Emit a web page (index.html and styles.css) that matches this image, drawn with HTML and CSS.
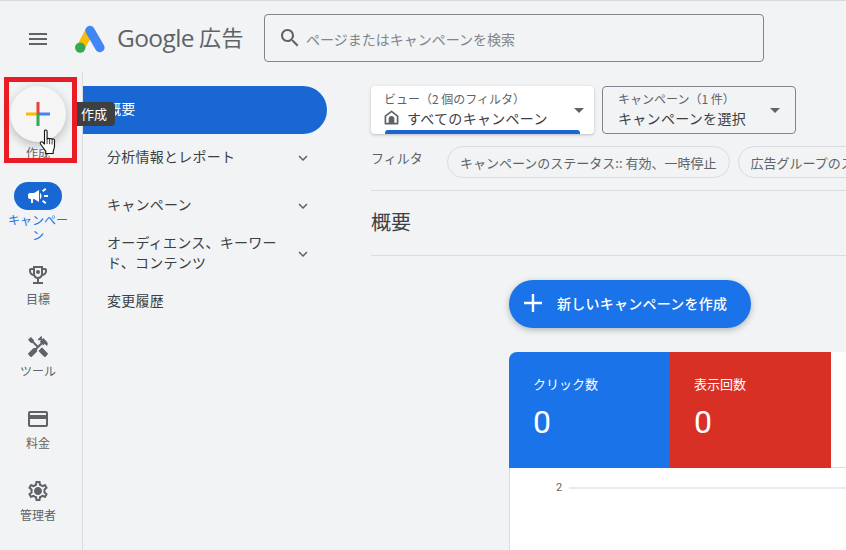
FILE: index.html
```html
<!DOCTYPE html>
<html lang="ja">
<head>
<meta charset="utf-8">
<title>Google 広告</title>
<link rel="stylesheet" href="styles.css">
</head>
<body>
<div class="app">
  <header class="topbar">
    <svg class="menu-icon" viewBox="0 0 24 24"><path d="M3 18h18v-2H3v2zm0-5h18v-2H3v2zm0-7v2h18V6H3z"/></svg>
    <svg class="logo" viewBox="0 0 30 28">
      <path d="M14.500 6 L6 22" stroke="#fbbc04" stroke-width="8.500" stroke-linecap="round" fill="none"/>
      <path d="M15 5.500 L24.800 22.500" stroke="#4285f4" stroke-width="9.500" stroke-linecap="round" fill="none"/>
      <circle cx="5.200" cy="22.600" r="5.200" fill="#34a853"/>
    </svg>
    <div class="brand"><span class="brand-g">Google</span><span class="brand-ad">広告</span></div>
    <div class="search">
      <svg class="search-icon" viewBox="0 0 24 24"><path d="M15.5 14h-.79l-.28-.27C15.41 12.59 16 11.11 16 9.5 16 5.91 13.09 3 9.5 3S3 5.91 3 9.5 5.91 16 9.5 16c1.61 0 3.09-.59 4.23-1.57l.27.28v.79l5 4.99L20.49 19l-4.99-5zm-6 0C7.01 14 5 11.99 5 9.5S7.01 5 9.5 5 14 7.01 14 9.5 11.99 14 9.5 14z"/></svg>
      <span>ページまたはキャンペーンを検索</span>
    </div>
  </header>

  <div class="body">
    <aside class="rail">
      <div class="create">
        <div class="fab">
          <svg viewBox="0 0 24 24" class="fab-plus">
            <rect x="0" y="10.5" width="12" height="3" fill="#fbbc04"/>
            <rect x="12" y="10.5" width="12" height="3" fill="#4285f4"/>
            <rect x="10.5" y="0" width="3" height="12" fill="#ea4335"/>
            <rect x="10.5" y="12" width="3" height="12" fill="#34a853"/>
          </svg>
        </div>
        <div class="rail-label create-label">作成</div>
      </div>
      <div class="rail-item active">
        <div class="pill">
          <svg class="rail-icon" viewBox="0 0 24 24"><path d="M18 11v2h4v-2h-4zm-2 6.61c.96.71 2.21 1.65 3.2 2.39.4-.53.8-1.07 1.2-1.6-.99-.74-2.24-1.68-3.2-2.4-.4.54-.8 1.08-1.2 1.61zM20.4 5.6c-.4-.53-.8-1.07-1.2-1.6-.99.74-2.24 1.68-3.2 2.4.4.53.8 1.07 1.2 1.6.96-.72 2.21-1.65 3.2-2.4zM4 9c-1.1 0-2 .9-2 2v2c0 1.1.9 2 2 2h1v4h2v-4h1l5 3V6L8 9H4zm11.5 3c0-1.33-.58-2.53-1.5-3.35v6.69c.92-.81 1.5-2.01 1.5-3.34z"/></svg>
        </div>
        <div class="rail-label">キャンペーン</div>
      </div>
      <div class="rail-item">
        <svg class="rail-icon" viewBox="0 0 24 24"><path d="M19 5h-2V3H7v2H5c-1.1 0-2 .9-2 2v1c0 2.55 1.92 4.63 4.39 4.94.63 1.5 1.98 2.63 3.61 2.96V19H7v2h10v-2h-4v-3.1c1.63-.33 2.98-1.46 3.61-2.96C19.08 12.63 21 10.55 21 8V7c0-1.1-.9-2-2-2zM5 8V7h2v3.82C5.84 10.4 5 9.3 5 8zm7 6c-1.65 0-3-1.35-3-3V5h6v6c0 1.65-1.35 3-3 3zm7-6c0 1.3-.84 2.4-2 2.82V7h2v1z"/><circle cx="12" cy="9" r="2"/></svg>
        <div class="rail-label">目標</div>
      </div>
      <div class="rail-item">
        <svg class="rail-icon" viewBox="0 0 24 24"><path d="M21.67 18.17l-5.3-5.3h-.99l-2.54 2.54v.99l5.3 5.3c.39.39 1.02.39 1.41 0l2.12-2.12c.39-.38.39-1.02 0-1.41z"/><path d="M17.34 10.19l1.41-1.41 2.12 2.12c1.17-1.17 1.17-3.07 0-4.24l-3.54-3.54-1.41 1.41V1.71l-.7-.71-3.54 3.54.71.71h2.83l-1.41 1.41 1.06 1.06-2.89 2.89-4.13-4.13V5.06L4.83 2.04 2 4.87 5.03 7.9h1.41l4.13 4.13-.85.85H7.6l-5.3 5.3c-.39.39-.39 1.02 0 1.41l2.12 2.12c.39.39 1.02.39 1.41 0l5.3-5.3v-2.12l5.15-5.15 1.06 1.05z"/></svg>
        <div class="rail-label">ツール</div>
      </div>
      <div class="rail-item">
        <svg class="rail-icon" viewBox="0 0 24 24"><path d="M20 4H4c-1.11 0-1.99.89-1.99 2L2 18c0 1.11.89 2 2 2h16c1.11 0 2-.89 2-2V6c0-1.11-.89-2-2-2zm0 14H4v-6h16v6zm0-10H4V6h16v2z"/></svg>
        <div class="rail-label">料金</div>
      </div>
      <div class="rail-item">
        <svg class="rail-icon" viewBox="0 0 24 24"><path d="M19.43 12.98c.04-.32.07-.64.07-.98 0-.34-.03-.66-.07-.98l2.11-1.65c.19-.15.24-.42.12-.64l-2-3.46c-.09-.16-.26-.25-.44-.25-.06 0-.12.01-.17.03l-2.49 1c-.52-.4-1.08-.73-1.69-.98l-.38-2.65C14.46 2.18 14.25 2 14 2h-4c-.25 0-.46.18-.49.42l-.38 2.65c-.61.25-1.17.59-1.69.98l-2.49-1c-.06-.02-.12-.03-.18-.03-.17 0-.34.09-.43.25l-2 3.46c-.13.22-.07.49.12.64l2.11 1.65c-.04.32-.07.65-.07.98 0 .33.03.66.07.98l-2.11 1.65c-.19.15-.24.42-.12.64l2 3.46c.09.16.26.25.44.25.06 0 .12-.01.17-.03l2.49-1c.52.4 1.08.73 1.69.98l.38 2.65c.03.24.24.42.49.42h4c.25 0 .46-.18.49-.42l.38-2.65c.61-.25 1.17-.59 1.69-.98l2.49 1c.06.02.12.03.18.03.17 0 .34-.09.43-.25l2-3.46c.12-.22.07-.49-.12-.64l-2.11-1.65zm-1.98-1.71c.04.31.05.52.05.73 0 .21-.02.43-.05.73l-.14 1.13.89.7 1.08.84-.7 1.21-1.27-.51-1.04-.42-.9.68c-.43.32-.84.56-1.25.73l-1.06.43-.16 1.13-.2 1.35h-1.4l-.19-1.35-.16-1.13-1.06-.43c-.43-.18-.83-.41-1.23-.71l-.91-.7-1.06.43-1.27.51-.7-1.21 1.08-.84.89-.7-.14-1.13c-.03-.31-.05-.54-.05-.74s.02-.43.05-.73l.14-1.13-.89-.7-1.08-.84.7-1.21 1.27.51 1.04.42.9-.68c.43-.32.84-.56 1.25-.73l1.06-.43.16-1.13.2-1.35h1.39l.19 1.35.16 1.13 1.06.43c.43.18.83.41 1.23.71l.91.7 1.06-.43 1.27-.51.7 1.21-1.07.85-.89.7.14 1.13zM12 8c-2.21 0-4 1.79-4 4s1.79 4 4 4 4-1.79 4-4-1.79-4-4-4z"/></svg>
        <div class="rail-label">管理者</div>
      </div>
    </aside>

    <nav class="nav">
      <div class="nav-row current"><span>概要</span></div>
      <div class="nav-row"><span>分析情報とレポート</span><svg class="chev" viewBox="0 0 24 24"><path d="M7.41 8.59L12 13.17l4.59-4.58L18 10l-6 6-6-6z"/></svg></div>
      <div class="nav-row"><span>キャンペーン</span><svg class="chev" viewBox="0 0 24 24"><path d="M7.41 8.59L12 13.17l4.59-4.58L18 10l-6 6-6-6z"/></svg></div>
      <div class="nav-row"><span>オーディエンス、キーワード、コンテンツ</span><svg class="chev" viewBox="0 0 24 24"><path d="M7.41 8.59L12 13.17l4.59-4.58L18 10l-6 6-6-6z"/></svg></div>
      <div class="nav-row"><span>変更履歴</span></div>
    </nav>

    <main class="main">
      <div class="pickers">
        <div class="picker picker-view">
          <div class="picker-text">
            <div class="picker-cap">ビュー（2 個のフィルタ）</div>
            <div class="picker-value">
              <svg class="home" viewBox="0 0 16 16"><path d="M8 1.5 1.5 6.5V14.5H14.5V6.5Z" fill="none" stroke="#5f6368" stroke-width="1.8" stroke-linejoin="round"/><path d="M5 14.5V9.5A3 3 0 0 1 11 9.5V14.5Z" fill="#5f6368"/></svg>
              <span>すべてのキャンペーン</span>
            </div>
          </div>
          <span class="caret"></span>
          <span class="picker-bar"></span>
        </div>
        <div class="picker picker-camp">
          <div class="picker-text">
            <div class="picker-cap">キャンペーン（1 件）</div>
            <div class="picker-value"><span>キャンペーンを選択</span></div>
          </div>
          <span class="caret"></span>
        </div>
      </div>

      <div class="filters">
        <span class="filter-label">フィルタ</span>
        <span class="chip">キャンペーンのステータス:: 有効、一時停止</span>
        <span class="chip">広告グループのステータス:: 有効、一時停止</span>
      </div>

      <h1 class="title">概要</h1>

      <section class="overview">
        <button class="new-btn" type="button">
          <svg viewBox="0 0 24 24"><path d="M3 10.8h7.800V3h2.400v7.800H21v2.400h-7.800V21h-2.400v-7.800H3z"/></svg>
          <span>新しいキャンペーンを作成</span>
        </button>
        <div class="panel">
          <div class="stats">
            <div class="stat blue"><div class="stat-label">クリック数</div><div class="stat-value">0</div></div>
            <div class="stat red"><div class="stat-label">表示回数</div><div class="stat-value">0</div></div>
            <div class="stat blank"></div>
          </div>
          <div class="chart">
            <span class="tick">2</span>
            <span class="gridline"></span>
          </div>
        </div>
      </section>
    </main>
  </div>
</div>

<div class="highlight"></div>
<div class="tooltip">作成</div>
<svg class="cursor" viewBox="0 0 18 26"><path d="M5.500 2.200c0-1.600 2.600-1.600 2.600 0V10c0-.9 2.500-1 2.500.2.100-1 2.400-1 2.500.3.200-.9 2.300-.8 2.400.6v6c0 2.200-.6 3.300-1.300 5v2.400H6.800v-2.200L1.500 15c-1-1.500.7-3.100 2.200-1.700l1.800 1.700z" fill="#fff" stroke="#111" stroke-width="1.100" stroke-linejoin="round"/><path d="M8.100 10v5M10.600 10.200v5M13.100 10.500v5" stroke="#111" stroke-width=".8" fill="none"/></svg>
</body>
</html>
```
FILE: styles.css
```css
* { box-sizing: border-box; }
html, body { margin: 0; padding: 0; height: 100%; overflow: hidden; }
body {
  background: #f1f3f4;
  color: #3c4043;
  font-family: "Noto Sans CJK JP", "Noto Sans", sans-serif;
  font-size: 14px;
  position: relative;
}
.app { display: flex; flex-direction: column; height: 550px; border-top: 1px solid #d8d9db; }

/* top bar */
.topbar { display: flex; align-items: center; height: 71px; padding: 5px 0 0 26px; flex: none; }
.menu-icon { width: 24px; height: 24px; fill: #5f6368; flex: none; margin-right: 25px; }
.logo { width: 30px; height: 28px; flex: none; margin-right: 12px; }
.brand { display: flex; align-items: center; color: #5f6368; width: 147px; flex: none; white-space: nowrap; }
.brand-g { font-family: "Open Sans", sans-serif; font-size: 24.5px; letter-spacing: -.6px; margin: -4px 5px 0 0; }
.brand-ad { font-size: 22px; letter-spacing: .5px; margin-top: -6px; }
.search {
  display: flex; align-items: center; width: 500px; height: 48px; margin-top: -2px;
  border: 1px solid #80868b; border-radius: 4px; padding-left: 13px; color: #80868b; font-size: 14px;
}
.search span { margin-top: 2px; }
.search-icon { width: 24px; height: 24px; fill: #5f6368; margin-right: 4px; }

/* layout */
.body { display: flex; flex: 1; min-height: 0; }

/* icon rail */
.rail { width: 83px; flex: none; border-right: 1px solid #dadce0; padding: 14px 13px 0 7px; display: flex; flex-direction: column; align-items: center; text-align: center; }
.rail-label { font-size: 12px; line-height: 15px; color: #5f6368; width: 62px; }
.create { display: flex; flex-direction: column; align-items: center; height: 96px; flex: none; }
.fab { width: 56px; height: 56px; border-radius: 50%; background: #f5f5f5; display: flex; align-items: center; justify-content: center; box-shadow: 0 3px 10px rgba(60,64,67,.32); flex: none; }
.fab-plus { width: 24px; height: 24px; }
.create-label { margin-top: 3px; }
.rail-item { display: flex; flex-direction: column; align-items: center; height: 72px; flex: none; }
.rail-item.active { height: 81px; }
.rail-icon { width: 24px; height: 24px; fill: #5f6368; flex: none; }
.rail-item .rail-label { margin-top: 4px; }
.pill { width: 48px; height: 28px; border-radius: 14px; background: #1967d2; display: flex; align-items: center; justify-content: center; flex: none; }
.pill .rail-icon { fill: #fff; }
.rail-item.active .rail-label { color: #1a73e8; margin-top: 2px; }

/* nav */
.nav { width: 244px; flex: none; padding-top: 14px; }
.nav-row { display: flex; align-items: center; justify-content: space-between; height: 48px; padding: 0 15px 0 24px; font-size: 14px; line-height: 20px; letter-spacing: .25px; color: #3c4043; }
.nav-row span { width: 176px; margin-top: -4px; }
.nav-row.current { background: #1967d2; color: #fff; border-radius: 0 24px 24px 0; }
.chev { width: 18px; height: 18px; fill: #5f6368; flex: none; }

/* main */
.main { flex: 1; min-width: 0; overflow: hidden; padding: 14px 0 0 44px; }
.pickers { display: flex; gap: 8px; }
.picker { position: relative; height: 48px; display: flex; align-items: center; justify-content: space-between; border-radius: 4px; flex: none; }
.picker-view { width: 223px; background: #fff; padding: 0 10px 0 13px; box-shadow: 0 1px 3px rgba(60,64,67,.3); }
.picker-camp { width: 194px; border: 1px solid #80868b; padding: 0 15px; }
.picker-text { margin-top: -2px; }
.picker-cap { font-size: 12px; line-height: 15px; margin-bottom: 2px; color: #5f6368; white-space: nowrap; }
.picker-value { display: flex; align-items: center; font-size: 14px; line-height: 20px; letter-spacing: .3px; color: #3c4043; white-space: nowrap; }
.home { width: 15px; height: 15px; margin: 0 8px 0 0; flex: none; }
.caret { width: 0; height: 0; border: 5px solid transparent; border-top-color: #5f6368; border-bottom-width: 0; flex: none; }
.picker-bar { position: absolute; left: 14px; right: 14px; bottom: 0; height: 4px; background: #1967d2; border-radius: 3px 3px 0 0; }

.filters { display: flex; align-items: center; gap: 8px; height: 32px; margin-top: 12px; white-space: nowrap; }
.filter-label { width: 68px; flex: none; font-size: 13px; color: #5f6368; margin-top: -10px; }
.chip { flex: none; height: 32px; display: inline-flex; align-items: center; padding: 0 12px; border: 1px solid #dadce0; border-radius: 16px; font-size: 13px; color: #5f6368; }

.title { margin: 12px 0 0; height: 66px; border-top: 1px solid #dadce0; border-bottom: 1px solid #dadce0; font-size: 20px; font-weight: 400; padding-bottom: 4px; color: #3c4043; display: flex; align-items: center; }

.overview { margin-left: 138px; padding-top: 24px; }
.new-btn { display: flex; align-items: center; width: 242px; height: 48px; padding: 0 0 2px 12px; border: 0; border-radius: 24px; background: #1a73e8; color: #fff; font: 500 14px "Noto Sans CJK JP", sans-serif; letter-spacing: .25px; box-shadow: 0 2px 6px rgba(60,64,67,.35); }
.new-btn svg { width: 24px; height: 24px; fill: #fff; margin-right: 12px; }
.panel { margin-top: 24px; width: 400px; background: #fff; border-radius: 8px 0 0 0; overflow: hidden; height: 200px; }
.stats { display: flex; height: 116px; }
.stat { width: 161px; flex: none; padding: 22px 24px 0; color: #fff; }
.stat.blue { background: #1a73e8; }
.stat.red { background: #d93025; }
.stat.blank { flex: 1; background: #fff; border-bottom: 1px solid #dadce0; }
.stat-label { font-size: 13px; line-height: 20px; }
.stat-value { font-family: "Roboto", sans-serif; font-size: 32px; line-height: 38px; margin-top: 9px; }
.chart { display: flex; align-items: center; height: 84px; padding: 0 0 44px 46px; border-left: 1px solid #dadce0; }
.tick { font-family: "Roboto", sans-serif; font-size: 11px; color: #5f6368; width: 13px; flex: none; margin-top: -1px; }
.gridline { flex: 1; height: 2px; background: #e8eaed; margin-top: -1px; }

/* annotation overlays */
.highlight { position: absolute; left: 4px; top: 77px; width: 73px; height: 86px; border: 5px solid #e81c24; }
.tooltip { position: absolute; left: 77px; top: 102px; width: 38px; height: 24px; border-radius: 0 4px 4px 0; background: #3c4043; color: #fff; font-size: 13px; line-height: 24px; padding-left: 4px; white-space: nowrap; }
.cursor { position: absolute; left: 39px; top: 129px; width: 18px; height: 26px; }
```
